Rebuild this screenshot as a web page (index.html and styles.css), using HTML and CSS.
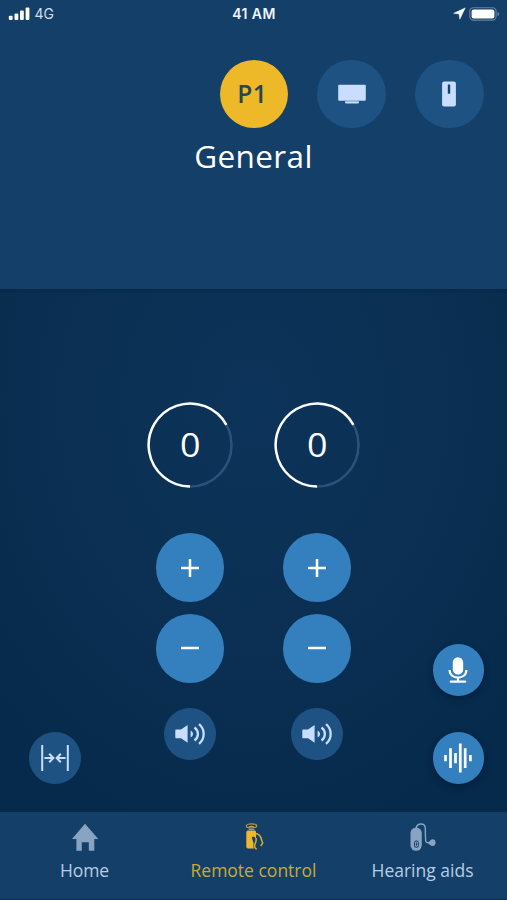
FILE: index.html
```html
<!DOCTYPE html>
<html lang="en">
<head>
<meta charset="utf-8">
<title>Remote control</title>
<link rel="stylesheet" href="styles.css">
</head>
<body>
<div class="app">
  <header class="top">
    <div class="status">
      <div class="status-side">
        <svg width="22" height="14" viewBox="0 0 22 14" fill="#fff"><rect x="0.8" y="8.7" width="3.8" height="4.3" rx="1"/><rect x="6.5" y="6.5" width="3.8" height="6.500" rx="1"/><rect x="12" y="3.500" width="3.8" height="9.500" rx="1"/><rect x="17.6" y="0.6" width="3.8" height="12.4" rx="1"/></svg>
        <span class="network">4G</span>
      </div>
      <span class="clock">41 AM</span>
      <div class="status-side status-right">
        <svg width="13" height="13" viewBox="0 0 13 13"><path d="M12.200.900.700 6.300l5.400.600.700 5.300z" fill="#fff" stroke="#fff" stroke-width=".5" stroke-linejoin="round"/></svg>
        <svg width="31" height="14" viewBox="0 0 31 14"><rect x=".8" y=".7" width="26.300" height="12.400" rx="3.600" fill="none" stroke="#6784a2" stroke-width="1.100"/><rect x="2.600" y="2.400" width="22.800" height="9" rx="2" fill="#fff"/><path d="M28.500 4.700c2.200.8 2.200 3.600 0 4.400z" fill="#6784a2"/></svg>
      </div>
    </div>
    <div class="programs">
      <button class="round large selected">P1</button>
      <button class="round large muted" aria-label="TV"><svg width="28" height="20" viewBox="0 0 28 20" fill="#c8ddff"><rect width="27.600" height="16" x=".2" y=".7" rx="1"/><rect x="7" y="17.200" width="14" height="2.200" rx=".8"/></svg></button>
      <button class="round large muted" aria-label="Microphone"><svg width="14" height="26" viewBox="0 0 14 26"><rect x=".1" y=".5" width="13.800" height="25" rx="2" fill="#c8ddff"/><path d="M7 3.500v9.200" stroke="#15456f" stroke-width="2.400"/></svg></button>
    </div>
    <h1 class="title">General</h1>
  </header>

  <main class="controls">
    <div class="side left">
      <button class="round small muted" aria-label="Merge"><svg width="28" height="28" viewBox="0 0 28 28" fill="none" stroke="#c8ddff" stroke-width="2"><path d="M1.200 1v26M26.800 1v26M3.400 14h8M24.600 14h-8M8.200 9.800l4.200 4.200-4.200 4.200M19.800 9.800 15.600 14l4.200 4.200"/></svg></button>
    </div>
    <section class="channel">
      <div class="dial"><svg class="ring" viewBox="0 0 86 86" fill="none" stroke-width="2.500"><circle cx="43" cy="43" r="41.500" stroke="#2c527b"/><path d="M43 84.500A41.500 41.500 0 1 1 79.400 22.800" stroke="#fff"/></svg><span>0</span></div>
      <button class="round large action plus" aria-label="Increase"><svg width="18" height="18" viewBox="0 0 18 18" stroke="#fff" stroke-width="2.500"><path d="M0 9h18M9 0v18"/></svg></button>
      <button class="round large action" aria-label="Decrease"><svg width="18" height="18" viewBox="0 0 18 18" stroke="#fff" stroke-width="2.500"><path d="M0 9h18"/></svg></button>
      <button class="round small muted mute" aria-label="Mute"><svg width="30" height="22" viewBox="0 0 30 22" fill="none" stroke="#c8ddff" stroke-width="2.300"><path d="M.3 7.200Q.3 6.500 1 6.500h5L12.600 2v17.800L6 15.200H1q-.7 0-.7-.7z" fill="#c8ddff" stroke="none"/><path d="M15.600 7.500c3.200 1.700 3.200 5.300 0 7z" fill="#c8ddff" stroke="none"/><path d="M19.500 4.500c4.500 3.200 4.500 9.800 0 13M24 1.200c6.200 5 6.200 14.700 0 19.600"/></svg></button>
    </section>
    <section class="channel">
      <div class="dial"><svg class="ring" viewBox="0 0 86 86" fill="none" stroke-width="2.500"><circle cx="43" cy="43" r="41.500" stroke="#2c527b"/><path d="M43 84.500A41.500 41.500 0 1 1 79.400 22.800" stroke="#fff"/></svg><span>0</span></div>
      <button class="round large action plus" aria-label="Increase"><svg width="18" height="18" viewBox="0 0 18 18" stroke="#fff" stroke-width="2.500"><path d="M0 9h18M9 0v18"/></svg></button>
      <button class="round large action" aria-label="Decrease"><svg width="18" height="18" viewBox="0 0 18 18" stroke="#fff" stroke-width="2.500"><path d="M0 9h18"/></svg></button>
      <button class="round small muted mute" aria-label="Mute"><svg width="30" height="22" viewBox="0 0 30 22" fill="none" stroke="#c8ddff" stroke-width="2.300"><path d="M.3 7.200Q.3 6.500 1 6.500h5L12.600 2v17.800L6 15.200H1q-.7 0-.7-.7z" fill="#c8ddff" stroke="none"/><path d="M15.600 7.500c3.200 1.700 3.200 5.300 0 7z" fill="#c8ddff" stroke="none"/><path d="M19.500 4.500c4.500 3.200 4.500 9.800 0 13M24 1.200c6.200 5 6.200 14.700 0 19.600"/></svg></button>
    </section>
    <div class="side right">
      <button class="round small action raised" aria-label="Speech"><svg width="20" height="28" viewBox="0 0 20 28" fill="none" stroke="#fff" stroke-width="2.200"><rect x="4.800" y="1.200" width="10.400" height="17.400" rx="5.200" fill="#fff" stroke="none"/><path d="M1.600 14c0 10.200 16.800 10.200 16.800 0M10 21.500v4"/><path d="M2.800 25.700h14.400" stroke-linecap="round"/></svg></button>
      <button class="round small action raised" aria-label="Sound"><svg width="28" height="30" viewBox="0 0 28 30" stroke="#fff" stroke-width="2.700"><path d="M1.500 12v6.300M6.500 5.200v19.800M11.500 10v10.300M16.300.4v29.200M21.200 5.200v19.800M26.400 12v6.300"/></svg></button>
    </div>
  </main>

  <nav class="tabs">
    <a class="tab"><svg width="28" height="28" viewBox="0 0 28 28"><path d="M14 .8 27.300 16h-4v11.700h-5.500v-8.400h-7v8.400H5.400V16H1z" fill="#88a4c2"/></svg><span class="home-label">Home</span></a>
    <a class="tab current"><svg width="20" height="28" viewBox="0 0 20 28" fill="none"><ellipse cx="7.500" cy="2.900" rx="5.200" ry="2" stroke="#a99a3c" stroke-width="1.200"/><path d="M4.700 4.200q2.800-1.800 5.600 0" stroke="#c5a934" stroke-width="1.200"/><path d="M4.700 6.400h5.600" stroke="#c5a934"/><path d="M2.300 9.200q0-1.700 1.700-1.700h6.600q1.500 0 1.500 1.700v6.200l-2.200-1.600q-2.300-.7-1.900 1.500l1.600 5-.3 2.600q0 1 .6 2.600H4q-1.700 0-1.700-1.700z" fill="#edb928"/><path d="M12 10.500c3.100.9 5.200 3.500 5.500 6.300l1.200 3.200-1.900 3.200M12.100 15v2.800l-1 3.200q-1.800 2.700 1.500 5.300" stroke="#d4ae30" stroke-width="1.500"/></svg><span class="remote-label">Remote control</span></a>
    <a class="tab"><svg width="28" height="28" viewBox="0 0 28 28" fill="none"><rect x="1.500" y="4.500" width="11.300" height="23.300" rx="5.600" fill="#88a4c2"/><path d="M7 5.500C8-.5 16.300-.5 16.300 5.500c0 5 .2 9.500.4 12.200q.2 1.900 2.300 1.900h3" stroke="#88a4c2" stroke-width="1.400"/><path d="M18 20.200c2-.3 3.200-3.900 5.600-3.900 4 0 4 6.800 0 6.800-2.200 0-3.300-2.900-5.600-2.900z" fill="#88a4c2"/><rect x="5.500" y="18" width="3.800" height="6.300" rx="1.500" stroke="#143f69"/><path d="M7.400 19.500v3.200" stroke="#143f69"/></svg><span class="aids-label">Hearing aids</span></a>
  </nav>
</div>
</body>
</html>
```

FILE: styles.css
```css
* { box-sizing: border-box; }
body { margin: 0; font-family: "Open Sans", "Noto Sans", sans-serif; color: #fff; background: #143f69; }
svg { display: block; flex: none; }
.app { width: 507px; height: 900px; display: flex; flex-direction: column; overflow: hidden; }
.top { height: 289px; background: #143f69; flex: none; }
.status { height: 27px; padding: 0 7px 0 8px; display: grid; grid-template-columns: 1fr auto 1fr; align-items: center; font-family: Inter, sans-serif; font-size: 14px; }
.status-side { display: flex; align-items: center; gap: 4.5px; }
.status-right { justify-content: flex-end; gap: 3.5px; }
.network { color: #d3deeb; }
.clock { font-weight: 600; color: #edf4fc; letter-spacing: .4px; }
.programs { display: flex; justify-content: flex-end; gap: 29.3px; padding: 32.5px 23.3px 0 0; }
.round { display: flex; align-items: center; justify-content: center; border: 0; border-radius: 50%; padding: 0; flex: none; }
.large { width: 68.5px; height: 68.5px; }
.small { width: 51.5px; height: 51.5px; }
.selected { background: #edb928; color: #254653; font: 600 24.5px "Open Sans", sans-serif; padding-right: 3px; letter-spacing: .5px; }
.muted { background: #1d5283; }
.action { background: #3480be; }
.raised { box-shadow: 0 3px 7px rgba(0, 18, 43, .45); }
.title { margin: 7px 0 0; text-align: center; font-size: 31.5px; font-weight: 400; line-height: 42px; letter-spacing: .4px; }
.controls { flex: 1; display: grid; grid-template-columns: 1fr 86px 86px 1fr; column-gap: 41.2px; align-items: end; padding: 0 23px 28.3px; background: linear-gradient(#04294a, #04294a00 5px), radial-gradient(ellipse 340px 440px at 50% 22%, #0c3359, #0a2f52 60%, #062a4b); }
.side { display: flex; flex-direction: column; gap: 36.5px; }
.left { padding-left: 6px; }
.right { align-items: flex-end; }
.channel { display: flex; flex-direction: column; align-items: center; padding-bottom: 24px; }
.dial { width: 86px; height: 86px; display: grid; place-items: center; font-size: 32px; line-height: 42px; }
.dial span { transform: scaleX(1.12); }
.ring, .dial span { grid-area: 1 / 1; }
.ring { width: 86px; height: 86px; }
.plus { margin: 45px 0 12.3px; }
.mute { margin-top: 25.5px; }
.tabs { height: 88px; flex: none; display: grid; grid-template-columns: repeat(3, 1fr); background: #143f69; border-bottom: 1px solid #0b3358; box-shadow: 0 -1px 2px #082b4c; }
.tab { display: flex; flex-direction: column; align-items: center; padding-top: 10.5px; color: #b7cde5; font-size: 17.5px; line-height: 24px; }
.tab span { margin-top: 7.5px; white-space: nowrap; }
.home-label { letter-spacing: -.1px; }
.current { color: #c7aa38; }
```
